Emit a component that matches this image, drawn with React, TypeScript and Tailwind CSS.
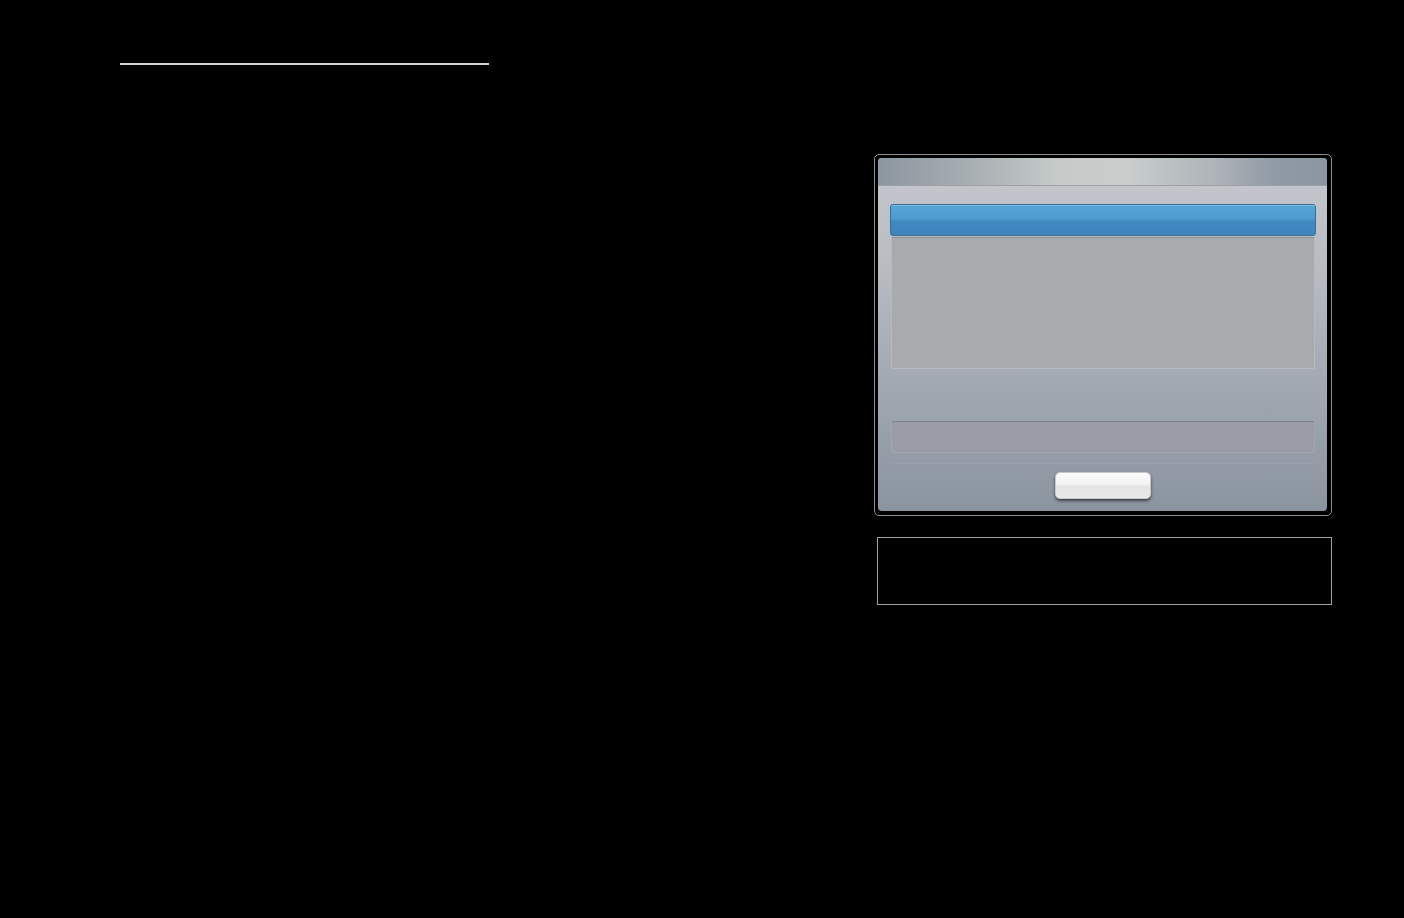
export default function App() {
  return (
    <div className="w-full h-[918px] bg-black overflow-hidden pt-[63px]" style={{ fontFamily: '"Liberation Sans", Arial, sans-serif' }}>
      <div className="ml-[120px] w-[369px] h-[2px] bg-[#d2d2d2]" />

      <div className="mt-[89px] ml-[874px] w-[458px] h-[362px] border border-[#8e8e8e] rounded-[5px] p-[3px]">
        <div className="w-[449px] h-[353px] rounded-[4px] overflow-hidden flex flex-col bg-[linear-gradient(to_bottom,#c6c8ce_0%,#b9bcc3_30%,#a4abb4_60%,#8a949f_100%)]">
          <div className="h-[28px] shrink-0 border-b border-[#9ca1a7] bg-[linear-gradient(to_right,#8c96a0_0%,#a7aeb2_20%,#c6cbca_40%,#c9cecd_55%,#aeb4b8_75%,#919ba5_88%,#8a96a2_100%)]" />
          <div className="flex flex-col pt-[18px] pl-[12px] pr-[11px]">
            <div className="h-[32px] rounded-[3px] border border-[#3b6f99] bg-[linear-gradient(to_bottom,#56a6d8_0%,#4e9ccf_45%,#4189c2_55%,#3f84bd_100%)] shadow-[inset_0_1px_0_rgba(255,255,255,0.25)]" />
            <div className="mt-[1px] mx-[1px] h-[132px] rounded-[2px] border border-[#b7b9be] border-t-[#8d8f94] bg-[#a9aaae]" />
            <div className="mt-[52px] mx-[1px] h-[32px] rounded-[3px] border border-[#a2a6ae] border-t-[#7b808a] bg-[#9b9ca7]" />
            <div className="mt-[10px] h-[1px] bg-[#98a0aa]" />
          </div>
          <div className="flex justify-center mt-[8px]">
            <div className="w-[96px] h-[27px] rounded-[5px] border border-[#c8c8c8] bg-[linear-gradient(to_bottom,#fbfbfb_0%,#f1f1f1_48%,#e2e2e2_52%,#e9e9e9_100%)] shadow-[0_2px_3px_rgba(40,45,55,0.8)]" />
          </div>
        </div>
      </div>

      <div className="mt-[21px] ml-[877px] w-[455px] h-[68px] border border-[#a0a0a0]" />
    </div>
  );
}
